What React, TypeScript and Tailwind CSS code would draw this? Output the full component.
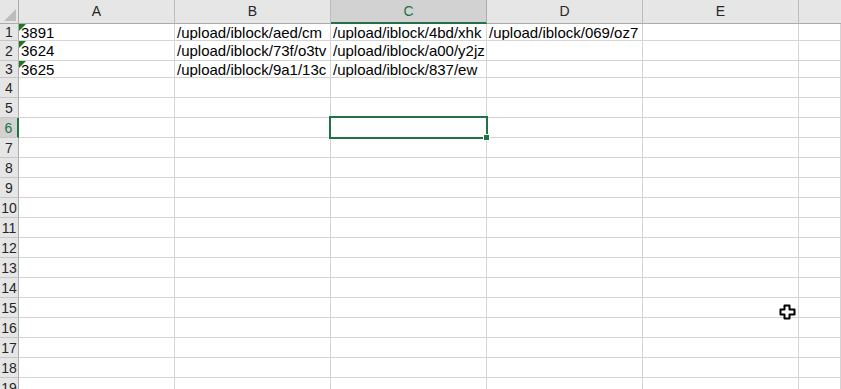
import React from "react";

const COLS = ["A", "B", "C", "D", "E"];
const ROW_HEIGHTS: Record<number, string> = { 1: "h-[17px]", 2: "h-[20px]", 3: "h-[17px]" };

const DATA: Record<number, Record<string, string>> = {
  1: { A: "3891", B: "/upload/iblock/aed/cm", C: "/upload/iblock/4bd/xhk", D: "/upload/iblock/069/oz7" },
  2: { A: "3624", B: "/upload/iblock/73f/o3tv", C: "/upload/iblock/a00/y2jz" },
  3: { A: "3625", B: "/upload/iblock/9a1/13c", C: "/upload/iblock/837/ew" },
};

const SELECTED_COL = "C";
const SELECTED_ROW = 6;

const Cell: React.FC<{ text?: string; flag?: boolean; last?: boolean }> = ({ text, flag, last }) => (
  <div
    className={`relative flex items-center overflow-hidden whitespace-nowrap border-r border-b border-[#d4d4d4] pl-[2px] text-[15px] leading-none text-black ${
      last ? "flex-1" : "w-[156px] shrink-0"
    }`}
  >
    {flag && (
      <svg className="absolute left-0 top-0" width="7" height="7" viewBox="0 0 7 7">
        <polygon points="0,0 7,0 0,7" fill="#1f7a1f" />
      </svg>
    )}
    {text}
  </div>
);

export default function App() {
  const rows = Array.from({ length: 19 }, (_, i) => i + 1);

  return (
    <div
      className="relative h-[389px] w-[841px] overflow-hidden bg-white"
      style={{ fontFamily: '"Liberation Sans", Arial, sans-serif' }}
    >
      {/* Column headers */}
      <div className="flex h-[24px]">
        <div className="relative w-[19px] shrink-0 border-r border-b border-[#ababab] bg-[#e6e6e6]">
          <svg className="absolute left-[4px] top-[9px]" width="12" height="12" viewBox="0 0 12 12">
            <polygon points="12,0 12,12 0,12" fill="#bcbcbc" />
          </svg>
        </div>
        {COLS.map((c) => (
          <div
            key={c}
            className={`flex w-[156px] shrink-0 items-center justify-center border-r text-[14px] ${
              c === SELECTED_COL
                ? "border-r-[#ababab] border-b-2 border-b-[#217346] bg-[#d2d2d2] text-[#217346]"
                : "border-r-[#bcbcbc] border-b border-b-[#ababab] bg-[#e6e6e6] text-[#262626]"
            }`}
          >
            {c}
          </div>
        ))}
        <div className="flex-1 border-b border-[#ababab] bg-[#e6e6e6]" />
      </div>

      {/* Rows */}
      {rows.map((r) => (
        <div key={r} className={`flex ${ROW_HEIGHTS[r] ?? "h-[20px]"}`}>
          <div
            className={`flex w-[19px] shrink-0 items-center justify-center border-b border-b-[#c6c6c6] text-[14px] leading-none ${
              r === SELECTED_ROW
                ? "border-r-2 border-r-[#217346] bg-[#d2d2d2] text-[#217346]"
                : "border-r border-r-[#ababab] bg-[#e6e6e6] text-[#262626]"
            }`}
          >
            {r}
          </div>
          {COLS.map((c) => (
            <Cell key={c} text={DATA[r]?.[c]} flag={c === "A" && !!DATA[r]?.[c]} />
          ))}
          <Cell last />
        </div>
      ))}

      {/* Active cell C6 */}
      <div className="absolute left-[329px] top-[116px] h-[23px] w-[159px] border-2 border-[#217346]" />
      <div className="absolute left-[483px] top-[134px] h-[7px] w-[7px] border border-white bg-[#217346]" />

      {/* Mouse cursor */}
      <svg className="absolute left-[779px] top-[304px]" width="17" height="16" viewBox="0 0 17 16">
        <path
          d="M5.5 1.5 H10.5 V5.5 H15.5 V10.5 H10.5 V14.5 H5.5 V10.5 H1.5 V5.5 H5.5 Z"
          fill="#ffffff"
          stroke="#000000"
          strokeWidth="2"
          strokeLinejoin="round"
        />
      </svg>
    </div>
  );
}
